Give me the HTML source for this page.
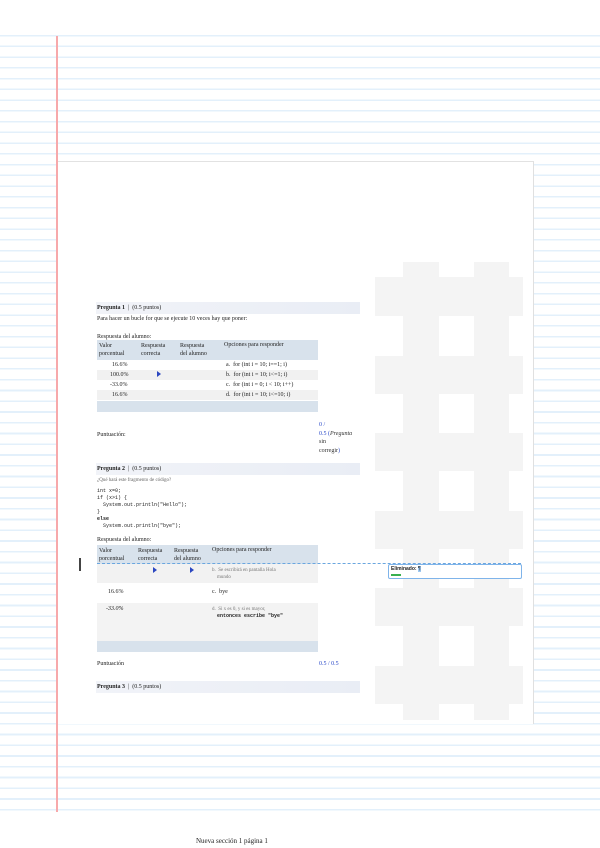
<!DOCTYPE html>
<html><head><meta charset="utf-8"><style>
*{margin:0;padding:0;box-sizing:border-box}
body{width:600px;height:848px;position:relative;background:#fff;font-family:"Liberation Serif",serif;color:#222;overflow:hidden}
.lines{position:absolute;left:0;top:35px;width:600px;height:778px;background:repeating-linear-gradient(to bottom,#e3f0fb 0,#e3f0fb 1.5px,transparent 1.5px,transparent 10.75px)}
.red{position:absolute;left:56px;top:36px;width:2px;height:776px;background:#f7a9ab}
.panel{position:absolute;left:58px;top:161px;width:476px;height:563px;background:#fff;border-top:1px solid #e2e2e2;border-right:1px solid #e0e0e0}
.a{position:absolute;font-size:6px;line-height:7px;white-space:nowrap}
.g{position:absolute;background:#f4f4f4}
.bar{position:absolute;left:96px;width:264px;height:12px;background:linear-gradient(to right,#f1f3f8,#e9edf5)}
.th{position:absolute;background:#d8e2ec}
.mono{font-family:"Liberation Mono",monospace}
.blue{color:#2a49c8}
.tri{position:absolute;width:0;height:0;border-top:3px solid transparent;border-bottom:3px solid transparent;border-left:4px solid #2b47c0}
</style></head><body>
<div class="lines"></div>
<div class="red"></div>
<div class="panel"></div>
<!-- sidebar grid -->
<div class="g" style="left:403px;top:262px;width:36px;height:458px"></div>
<div class="g" style="left:474px;top:262px;width:35px;height:458px"></div>
<div class="g" style="left:375px;top:277px;width:148px;height:39px"></div>
<div class="g" style="left:375px;top:356px;width:148px;height:38px"></div>
<div class="g" style="left:375px;top:433px;width:148px;height:38px"></div>
<div class="g" style="left:375px;top:511px;width:148px;height:38px"></div>
<div class="g" style="left:375px;top:588px;width:148px;height:38px"></div>
<div class="g" style="left:375px;top:666px;width:148px;height:38px"></div>

<!-- Q1 -->
<div class="bar" style="top:302px"></div>
<div class="a" style="left:97px;top:305px"><b>Pregunta 1</b> &nbsp;|&nbsp; (0.5 puntos)</div>
<div class="a" style="left:97px;top:316px">Para hacer un bucle for que se ejecute 10 veces hay que poner:</div>
<div class="a" style="left:97px;top:334px">Respuesta del alumno:</div>
<div class="th" style="left:97px;top:340px;width:221px;height:20px"></div>
<div class="a" style="left:99px;top:342px;line-height:8px">Valor<br>porcentual</div>
<div class="a" style="left:141px;top:342px;line-height:8px">Respuesta<br>correcta</div>
<div class="a" style="left:180px;top:342px;line-height:8px">Respuesta<br>del alumno</div>
<div class="a" style="left:224px;top:342px">Opciones para responder</div>
<div class="g" style="left:97px;top:370px;width:221px;height:10px;background:#f1f1f1"></div>
<div class="g" style="left:97px;top:390px;width:221px;height:10px;background:#f1f1f1"></div>
<div class="a" style="left:112px;top:362px">16.6%</div>
<div class="a" style="left:110px;top:372px">100.0%</div>
<div class="a" style="left:110px;top:382px">-33.0%</div>
<div class="a" style="left:112px;top:392px">16.6%</div>
<div class="tri" style="left:157px;top:371px"></div>
<div class="a" style="left:226px;top:362px">a. &nbsp;for (int i = 10; i==1; i)</div>
<div class="a" style="left:226px;top:372px">b. &nbsp;for (int i = 10; i&lt;=1; i)</div>
<div class="a" style="left:226px;top:382px">c. &nbsp;for (int i = 0; i &lt; 10; i++)</div>
<div class="a" style="left:226px;top:392px">d. &nbsp;for (int i = 10; i&lt;=10; i)</div>
<div class="th" style="left:97px;top:401px;width:221px;height:11px"></div>
<div class="a" style="left:97px;top:432px">Puntuación:</div>
<div class="a blue" style="left:319px;top:421px;line-height:8.5px">0 /<br>0.5 (<i style="color:#333">Pregunta</i><br><span style="color:#333">sin</span><br><span style="color:#333">corregir</span>)</div>

<!-- Q2 -->
<div class="bar" style="top:463px"></div>
<div class="a" style="left:97px;top:466px"><b>Pregunta 2</b> &nbsp;|&nbsp; (0.5 puntos)</div>
<div class="a" style="left:97px;top:477px;color:#666;font-size:5px">¿Qué hará este fragmento de código?</div>
<div class="a mono" style="left:97px;top:488px;font-size:5px;line-height:7px">int x=0;<br>if (x&gt;1) {<br>&nbsp;&nbsp;System.out.println("Hello");<br>}<br><b>else</b><br>&nbsp;&nbsp;System.out.println("bye");</div>
<div class="a" style="left:97px;top:537px">Respuesta del alumno:</div>
<div class="th" style="left:97px;top:545px;width:221px;height:19px"></div>
<div class="a" style="left:99px;top:547px;line-height:8px">Valor<br>porcentual</div>
<div class="a" style="left:138px;top:547px;line-height:8px">Respuesta<br>correcta</div>
<div class="a" style="left:174px;top:547px;line-height:8px">Respuesta<br>del alumno</div>
<div class="a" style="left:212px;top:547px">Opciones para responder</div>
<div style="position:absolute;left:97px;top:563px;width:424px;border-top:1px dashed #6aa6df"></div>
<div class="g" style="left:97px;top:564px;width:221px;height:19px;background:#f2f2f2"></div>
<div class="g" style="left:97px;top:603px;width:221px;height:38px;background:#f3f3f3"></div>
<div class="tri" style="left:153px;top:567px"></div>
<div class="tri" style="left:190px;top:567px"></div>
<div class="a" style="left:212px;top:567px;font-size:5px;color:#777">b. &nbsp;Se escribirá en pantalla Hola<br>&nbsp;&nbsp;&nbsp;&nbsp;mundo</div>
<div class="a" style="left:108px;top:589px">16.6%</div>
<div class="a" style="left:212px;top:589px">c. &nbsp;bye</div>
<div class="a" style="left:106px;top:606px"><i>-33.0%</i></div>
<div class="a" style="left:212px;top:606px;font-size:5px;color:#777">d. &nbsp;Si x es 0, y si es mayor,<br>&nbsp;&nbsp;&nbsp;&nbsp;<b class="mono" style="color:#222">entonces escribe "bye"</b></div>
<div class="th" style="left:97px;top:641px;width:221px;height:11px"></div>
<div class="a" style="left:97px;top:661px">Puntuación</div>
<div class="a blue" style="left:319px;top:661px">0.5 / 0.5</div>
<div style="position:absolute;left:79px;top:558px;width:2px;height:13px;background:#444"></div>

<!-- Q3 -->
<div class="bar" style="top:681px"></div>
<div class="a" style="left:97px;top:684px"><b>Pregunta 3</b> &nbsp;|&nbsp; (0.5 puntos)</div>

<!-- comment -->
<div style="position:absolute;left:388px;top:564px;width:134px;height:15px;border:1px solid #7fb4ea;border-radius:2px;background:#fff"></div>
<div class="a" style="left:391px;top:566px;font-family:'Liberation Sans',sans-serif;font-size:5px"><b>Eliminado:</b> <span style="background:#9fc9f2">¶</span></div>
<div style="position:absolute;left:391px;top:574px;width:10px;height:2px;background:#39b050"></div>

<div class="a" style="left:196px;top:838px;font-size:7px">Nueva sección 1 página 1</div>
</body></html>
